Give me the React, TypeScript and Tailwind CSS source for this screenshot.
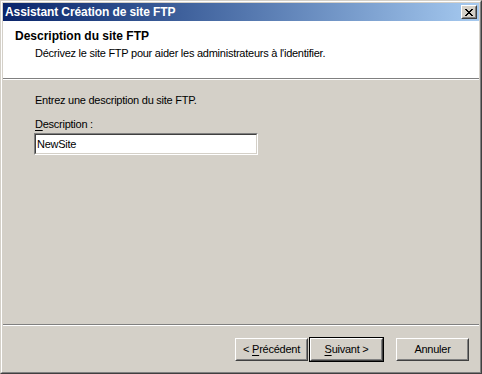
const font = { fontFamily: '"Liberation Sans", Arial, sans-serif' }

function Button({ label, mnemonic, rest, isDefault }: { label: string; mnemonic?: string; rest?: string; isDefault?: boolean }) {
  const inner = (
    <div className="flex h-full w-full border border-t-white border-l-white border-r-[#404040] border-b-[#404040]">
      <div className="flex flex-1 items-center justify-center border border-t-[#d4d0c8] border-l-[#d4d0c8] border-r-[#808080] border-b-[#808080] text-[11px] tracking-[-0.25px] text-black">
        {mnemonic !== undefined ? (
          <span>
            {label}
            <span className="underline underline-offset-2">{mnemonic}</span>
            {rest}
          </span>
        ) : (
          <span>{label}</span>
        )}
      </div>
    </div>
  )
  if (isDefault) {
    return <div className="h-[25px] w-[75px] border border-black">{inner}</div>
  }
  return <div className="h-[25px] w-[75px] p-px">{inner}</div>
}

export default function App() {
  return (
    <div style={font} className="flex h-[374px] w-[482px] flex-col border border-t-[#d4d0c8] border-l-[#d4d0c8] border-r-[#404040] border-b-[#404040] bg-[#d4d0c8]">
      <div className="flex flex-1 flex-col border border-t-white border-l-white border-r-[#808080] border-b-[#808080] p-px">
        {/* title bar */}
        <div className="flex h-[18px] items-center justify-between bg-gradient-to-r from-[#0a246a] to-[#a6caf0] pl-[2px] pr-[2px]">
          <span className="text-[12px] font-bold tracking-[-0.1px] text-white">Assistant Création de site FTP</span>
          <div className="flex h-[14px] w-[16px] border border-t-white border-l-white border-r-[#404040] border-b-[#404040]">
            <div className="flex flex-1 items-center justify-center border border-t-[#d4d0c8] border-l-[#d4d0c8] border-r-[#808080] border-b-[#808080] bg-[#d4d0c8]">
              <svg width="8" height="7" viewBox="0 0 8 7" shapeRendering="crispEdges">
                <path d="M0 0h2v1h-2zM6 0h2v1h-2zM1 1h2v1h-2zM5 1h2v1h-2zM2 2h4v1h-4zM3 3h2v1h-2zM2 4h4v1h-4zM1 5h2v1h-2zM5 5h2v1h-2zM0 6h2v1h-2zM6 6h2v1h-2z" fill="black" />
              </svg>
            </div>
          </div>
        </div>

        {/* header */}
        <div className="h-[57px] bg-white pl-[12px] pt-[8px]">
          <div className="text-[12px] font-bold leading-[14px] text-black">Description du site FTP</div>
          <div className="mt-[3px] pl-[20px] text-[11px] leading-[14px] tracking-[-0.25px] text-black">
            Décrivez le site FTP pour aider les administrateurs à l'identifier.
          </div>
        </div>
        <div className="border-t border-b border-t-[#808080] border-b-white" />

        {/* content */}
        <div className="flex flex-1 flex-col pl-[32px] pt-[13px] text-[11px] leading-[14px] tracking-[-0.25px] text-black">
          <div>Entrez une description du site FTP.</div>
          <div className="mt-[10px]">
            <span className="underline underline-offset-2">D</span>escription :
          </div>
          <div className="mt-[2px] -ml-px h-[22px] w-[224px] border border-t-[#808080] border-l-[#808080] border-r-white border-b-white">
            <div className="flex h-full items-center border border-t-[#404040] border-l-[#404040] border-r-[#d4d0c8] border-b-[#d4d0c8] bg-white pl-[1px]">
              NewSite
            </div>
          </div>
        </div>

        {/* footer */}
        <div className="border-t border-b border-t-[#808080] border-b-white" />
        <div className="flex h-[45px] items-start justify-end pr-[9px] pt-[11px]">
          <Button label="< " mnemonic="P" rest="récédent" />
          <Button label="" mnemonic="S" rest="uivant >" isDefault />
          <div className="w-[11px]" />
          <Button label="Annuler" />
        </div>
      </div>
    </div>
  )
}
